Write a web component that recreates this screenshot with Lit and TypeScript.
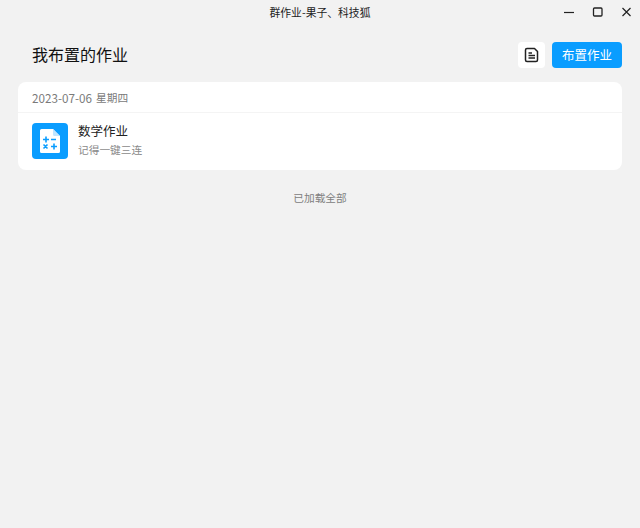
import { LitElement, html, css } from "lit";
import { customElement } from "lit/decorators.js";

@customElement("app-root")
export class AppRoot extends LitElement {
  static styles = css`
    :host {
      display: block;
      width: 640px;
      height: 528px;
      background: #f2f2f2;
      overflow: hidden;
      font-family: "Noto Sans CJK SC", "Noto Sans", sans-serif;
      color: #111;
    }
    .titlebar {
      position: relative;
      height: 25px;
      display: flex;
      align-items: flex-start;
      justify-content: center;
      font-size: 10.8px;
      line-height: 25px;
      color: #222;
    }
    .winctl {
      position: absolute;
      right: 0;
      top: 0;
      display: flex;
      align-items: center;
      height: 24px;
      padding-right: 5px;
      gap: 13px;
    }
    .winctl svg { display: block; }
    .head {
      display: flex;
      align-items: flex-start;
      justify-content: space-between;
      padding: 17px 18px 0 32px;
      height: 40px;
    }
    .head h1 {
      margin: 0;
      font-size: 16px;
      font-weight: 400;
      line-height: 24px;
    }
    .actions { display: flex; gap: 7px; align-items: center; }
    .iconbtn {
      width: 27px;
      height: 26px;
      background: #fff;
      border-radius: 4px;
      display: flex;
      align-items: center;
      justify-content: center;
    }
    .primary {
      width: 70px;
      height: 25px;
      padding-bottom: 1px;
      background: #0a9dff;
      color: #fff;
      border-radius: 4px;
      display: flex;
      align-items: center;
      justify-content: center;
      font-size: 12.5px;
    }
    .card {
      margin: 0 18px;
      background: #fff;
      border-radius: 8px;
      height: 88px;
    }
    .date {
      height: 29px;
      padding: 1px 14px 0;
      display: flex;
      align-items: center;
      gap: 4px;
      font-size: 11.7px;
      color: #7a7a7a;
      border-bottom: 1px solid #f4f4f4;
    }
    .week { font-size: 10.7px; }
    .row {
      display: flex;
      align-items: flex-start;
      gap: 10px;
      padding: 10px 14px 0;
    }
    .thumb {
      width: 36px;
      height: 36px;
      background: #0a9dff;
      border-radius: 4px;
      display: flex;
      align-items: center;
      justify-content: center;
    }
    .name { font-size: 12.5px; line-height: 16px; color: #222; }
    .sub { font-size: 10.7px; line-height: 16px; margin-top: 3px; color: #8a8a8a; }
    .foot {
      margin-top: 19px;
      text-align: center;
      font-size: 10.7px;
      line-height: 17px;
      color: #808080;
    }
  `;

  render() {
    return html`
      <div class="titlebar">
        <span>群作业-果子、科技狐</span>
        <div class="winctl">
          <svg width="16" height="16" viewBox="0 0 16 16"><path d="M3 8.500h10" stroke="#222" stroke-width="1.200" /></svg>
          <svg width="16" height="16" viewBox="0 0 16 16"><rect x="3.500" y="4" width="8.500" height="8" rx="1" fill="none" stroke="#222" stroke-width="1.300" /></svg>
          <svg width="16" height="16" viewBox="0 0 16 16"><path d="M3.500 4l8 8M11.500 4l-8 8" stroke="#222" stroke-width="1.200" /></svg>
        </div>
      </div>
      <div class="head">
        <h1>我布置的作业</h1>
        <div class="actions">
          <div class="iconbtn">
            <svg width="16" height="16" viewBox="0 0 16 16">
              <path d="M3 1.500c-.8 0-1.500.7-1.500 1.500v10c0 .8.700 1.500 1.500 1.500h9c.8 0 1.500-.7 1.500-1.500V4.500L10.500 1.500z" fill="none" stroke="#222" stroke-width="1.500" stroke-linejoin="round" />
              <path d="M4.500 6h3.500M4.500 8.500h6.500M4.500 11h6.500" stroke="#222" stroke-width="1.300" />
            </svg>
          </div>
          <div class="primary">布置作业</div>
        </div>
      </div>
      <div class="card">
        <div class="date"><span>2023-07-06</span><span class="week">星期四</span></div>
        <div class="row">
          <div class="thumb">
            <svg width="20" height="24" viewBox="0 0 20 24">
              <path d="M1.500 0H13l7 7v15.500a1.500 1.500 0 0 1-1.500 1.500h-17A1.500 1.500 0 0 1 0 22.500v-21A1.500 1.500 0 0 1 1.500 0z" fill="#fff" />
              <path d="M13 0l7 7h-5.500A1.500 1.500 0 0 1 13 5.500z" fill="#bfe5ff" />
              <path d="M3 10.500h6M6 7.500v6M11 10.500h5M3.500 15.500l4 4M7.500 15.500l-4 4M11 17.500h6M14 14.500v6" stroke="#0a9dff" stroke-width="1.600" fill="none" />
            </svg>
          </div>
          <div>
            <div class="name">数学作业</div>
            <div class="sub">记得一键三连</div>
          </div>
        </div>
      </div>
      <div class="foot">已加载全部</div>
    `;
  }
}
